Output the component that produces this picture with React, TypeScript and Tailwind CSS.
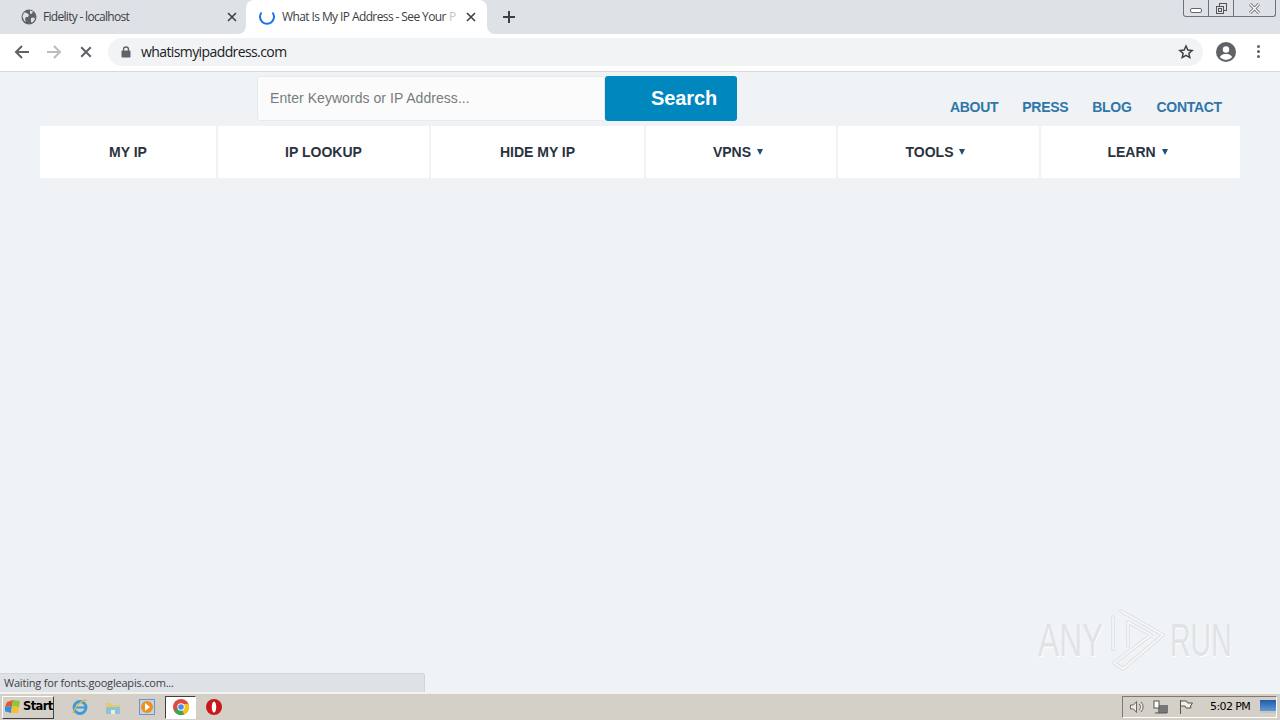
import React from "react";

const ui = { fontFamily: '"Open Sans","Noto Sans",sans-serif' };

function Globe() {
  return (
    <svg width="16" height="16" viewBox="0 0 16 16">
      <circle cx="8" cy="8" r="7.500" fill="#5f6368" />
      <path d="M3 3.500l3 .5 2 2-1 2-2 0-1 2 1 3-2-1.500-1.500-4zM9 1.500l3 1-1 2-2 .5zM10 9l3-.5 1 1.500-2 3-2 .5z" fill="#dee1e6" />
    </svg>
  );
}

function X({ size = 10, color = "#3c4043", w = 1.6 }: { size?: number; color?: string; w?: number }) {
  return (
    <svg width={size} height={size} viewBox="0 0 10 10">
      <path d="M1 1l8 8M9 1l-8 8" stroke={color} strokeWidth={w} fill="none" />
    </svg>
  );
}

function Tabs() {
  return (
    <div className="flex h-[34px] bg-[#dee1e6] relative shrink-0">
      <div className="w-[246px] flex items-center pl-[21px] pr-[9px]">
        <Globe />
        <span className="ml-[6px] text-[12px] leading-[16px] text-[#3c4043] flex-1 tracking-[-0.7px]" style={ui}>Fidelity - localhost</span>
        <X />
      </div>
      <div className="w-[241px] bg-white rounded-t-[8px] flex items-center pl-[13px] pr-[11px] relative">
        <svg className="absolute left-[-8px] bottom-0" width="8" height="8" viewBox="0 0 8 8">
          <path d="M8 0v8H0a8 8 0 0 0 8-8z" fill="#fff" />
        </svg>
        <svg className="absolute right-[-8px] bottom-0" width="8" height="8" viewBox="0 0 8 8">
          <path d="M0 0v8h8a8 8 0 0 1-8-8z" fill="#fff" />
        </svg>
        <svg width="16" height="16" viewBox="0 0 16 16" className="shrink-0">
          <path d="M2.500 3.500A7 7 0 1 0 13.500 3.500" stroke="#1a73e8" strokeWidth="2" fill="none" />
        </svg>
        <div className="ml-[7px] w-[175px] overflow-hidden whitespace-nowrap shrink-0 leading-[16px] flex">
          <span className="text-[12px] text-[#3c4043] tracking-[-0.6px]" style={ui}>What Is My IP Address - See Your</span>
          <span className="ml-[3px] text-[12px] text-[#c4c6c9] tracking-[-0.6px]" style={ui}>P</span>
        </div>
        <span className="ml-[9px]"><X /></span>
      </div>
      <div className="ml-[15px] pt-[10px]">
        <svg width="14" height="14" viewBox="0 0 14 14">
          <path d="M7 1v12M1 7h12" stroke="#3c4043" strokeWidth="2" />
        </svg>
      </div>
      <div className="absolute right-[4px] top-0 h-[17px] w-[93px] border border-t-0 border-[#6b7280] rounded-b-[3px] flex">
        <div className="w-[25px] border-r border-[#6b7280] flex items-center justify-center pt-[4px]">
          <div className="w-[12px] h-[5px] border border-[#666] rounded-[2px] bg-white" />
        </div>
        <div className="w-[25px] border-r border-[#6b7280] flex items-center justify-center">
          <svg width="13" height="13" viewBox="0 0 13 13" fill="none" stroke="#555">
            <rect x="4.500" y="1.500" width="7" height="7" />
            <rect x="1.500" y="4.500" width="7" height="7" fill="#dee1e6" />
            <rect x="3.500" y="6.500" width="3" height="3" />
          </svg>
        </div>
        <div className="flex-1 flex items-center justify-center">
          <svg width="13" height="11" viewBox="0 0 13 11">
            <path d="M2 1l9 9M11 1l-9 9" stroke="#666" strokeWidth="3" fill="none" />
            <path d="M2 1l9 9M11 1l-9 9" stroke="#fff" strokeWidth="1.400" fill="none" />
          </svg>
        </div>
      </div>
    </div>
  );
}

function Toolbar() {
  return (
    <div className="flex items-center h-[38px] bg-white border-b border-[#d8d8d8] shrink-0 pb-[2px]">
      <div className="w-[108px] flex items-center shrink-0">
        <svg className="ml-[14px]" width="16" height="16" viewBox="0 0 16 16" fill="none" stroke="#5f6368" strokeWidth="2">
          <path d="M15 8H2M8 2L2 8l6 6" />
        </svg>
        <svg className="ml-[16px]" width="16" height="16" viewBox="0 0 16 16" fill="none" stroke="#b9bcc0" strokeWidth="2">
          <path d="M1 8h13M8 2l6 6-6 6" />
        </svg>
        <span className="ml-[18px]"><X size={12} color="#5f6368" w={1.700} /></span>
      </div>
      <div className="w-[1095px] h-[28px] bg-[#f1f3f4] rounded-full flex items-center pl-[13px] shrink-0">
        <svg width="10" height="12" viewBox="0 0 10 12">
          <rect x="0.500" y="4.500" width="9" height="7" rx="1" fill="#5f6368" />
          <path d="M2.500 5V3.500a2.500 2.500 0 0 1 5 0V5" fill="none" stroke="#5f6368" strokeWidth="1.300" />
        </svg>
        <span className="ml-[10px] text-[14px] text-[#202124] tracking-[-0.6px]" style={ui}>whatismyipaddress.com</span>
        <svg className="ml-auto mr-[9px]" width="16" height="16" viewBox="0 0 24 24" fill="none" stroke="#3c4043" strokeWidth="2.200">
          <path d="M12 3l2.700 6 6.500.7-4.900 4.300 1.400 6.400L12 17l-5.700 3.400 1.400-6.400-4.900-4.300 6.500-.7z" />
        </svg>
      </div>
      <svg className="ml-[13px]" width="20" height="20" viewBox="0 0 20 20">
        <circle cx="10" cy="10" r="10" fill="#5f6368" />
        <circle cx="10" cy="7.500" r="3.200" fill="#fff" />
        <path d="M3.800 15c1.500-2.500 4-3 6.200-3s4.700.5 6.200 3a8 8 0 0 1-12.400 0z" fill="#fff" />
      </svg>
      <div className="ml-[21px] flex flex-col gap-[2px]">
        <div className="w-[3px] h-[3px] rounded-full bg-[#5f6368]" />
        <div className="w-[3px] h-[3px] rounded-full bg-[#5f6368]" />
        <div className="w-[3px] h-[3px] rounded-full bg-[#5f6368]" />
      </div>
    </div>
  );
}

const navFont = { fontFamily: '"Liberation Sans",Arial,sans-serif' };

function NavItem({ label, w, caret }: { label: string; w: string; caret?: boolean }) {
  return (
    <div className={`${w} h-[52px] bg-white flex items-center justify-center text-[14px] font-bold text-[#2a3240]`}>
      {label}
      {caret && <span className="ml-[6px] mr-[6px] w-0 h-0 border-x-[3.500px] border-x-transparent border-t-[6px] border-t-[#1f4f77] mb-[1px]" />}
    </div>
  );
}

function Page() {
  return (
    <div className="flex-1 bg-[#f0f3f6] relative overflow-hidden" style={navFont}>
      <div className="flex h-[54px]">
        <div className="ml-[257px] mt-[4px] h-[45px] w-[348px] bg-[#fbfbfb] border border-[#e8eaec] rounded-l-[3px] flex items-center pl-[12px] text-[14px] text-[#777b80] tracking-[0.05px]">
          Enter Keywords or IP Address...
        </div>
        <div className="mt-[4px] h-[45px] w-[132px] bg-[#0087be] rounded-[3px] text-white text-[20px] font-bold flex items-center pl-[46px] pb-[1px] tracking-[-0.1px]">
          Search
        </div>
        <div className="ml-[213px] mt-[27px] flex gap-[24px] text-[14px] font-bold text-[#2f76a8] leading-[16px] tracking-[-0.3px]">
          <span>ABOUT</span>
          <span>PRESS</span>
          <span>BLOG</span>
          <span className="ml-[1px]">CONTACT</span>
        </div>
      </div>
      <div className="ml-[40px] w-[1200px] flex gap-[2px]">
        <NavItem label="MY IP" w="w-[176px]" />
        <NavItem label="IP LOOKUP" w="w-[211px]" />
        <NavItem label="HIDE MY IP" w="w-[213px]" />
        <NavItem label="VPNS" w="w-[190px]" caret />
        <NavItem label="TOOLS" w="w-[201px]" caret />
        <NavItem label="LEARN" w="w-[199px]" caret />
      </div>

      <div className="absolute left-0 bottom-0 w-[425px] h-[19px] bg-[#dee1e6] rounded-tr-[3px] border-t border-r border-[#d2d5da] pl-[4px] text-[11px] text-[#3c4043] leading-[18px] tracking-[-0.2px]" style={ui}>
        Waiting for fonts.googleapis.com...
      </div>

      <div className="absolute left-[1038px] top-[536px] flex items-center text-[#e0e3e6]">
        <span className="text-[46px] font-normal leading-none scale-x-[0.69] origin-left w-[70px] [text-shadow:1px_1px_0_#fff]">ANY</span>
        <svg width="60" height="64" viewBox="0 0 60 64" fill="none" strokeLinejoin="round" strokeLinecap="round">
          <g stroke="#e2e5e8" strokeWidth="4">
            <path d="M5 9v32" />
            <path d="M13 3l42 24-40 34-9-6 37-28-23-13v24" />
          </g>
          <g stroke="#fbfcfd" strokeWidth="1.200">
            <path d="M5 9v32" />
            <path d="M13 3l42 24-40 34-9-6 37-28-23-13v24" />
          </g>
        </svg>
        <span className="ml-[2px] text-[46px] font-normal leading-none scale-x-[0.62] origin-left w-[70px] [text-shadow:1px_1px_0_#fff]">RUN</span>
      </div>
    </div>
  );
}

function Taskbar() {
  return (
    <div className="h-[28px] bg-[#d4d0c8] border-t-2 border-[#f4f2ec] flex items-center shrink-0 relative">
      <div className="ml-[2px] w-[52px] h-[23px] border border-t-white border-l-white border-r-[#404040] border-b-[#404040] bg-[#d4d0c8] flex items-center pl-[2px]">
        <svg width="17" height="16" viewBox="0 0 17 16">
          <path d="M2 3l6-2-1 6-7 1z" fill="#e8552a" />
          <path d="M8 1l7 1-1 6-7-1z" fill="#8cc63f" />
          <path d="M0 8l7-1-1 7-7-2z" fill="#2f8fe0" />
          <path d="M7 7l7 1-1 6-7 0z" fill="#f4c02c" />
        </svg>
        <span className="ml-[1px] text-[11.500px] font-bold text-black" style={{ fontFamily: '"DejaVu Sans",sans-serif', letterSpacing: "-0.6px" }}>Start</span>
      </div>
      <svg className="ml-[17px]" width="18" height="18" viewBox="0 0 18 18" fill="none">
        <circle cx="9" cy="9.500" r="6" stroke="#3b9ad9" strokeWidth="2.800" />
        <path d="M4 9.500h10" stroke="#3b9ad9" strokeWidth="2" />
        <path d="M2 15C4 8 11 2 16 2" stroke="#e0b93c" strokeWidth="1.300" />
      </svg>
      <svg className="ml-[16px]" width="16" height="16" viewBox="0 0 16 16">
        <path d="M1 4h5l1 2h8v9H1z" fill="#e8c963" />
        <rect x="1" y="8" width="14" height="7" fill="#8fc1d8" />
        <rect x="6" y="11" width="4" height="4" fill="#e8f0d8" />
      </svg>
      <div className="ml-[18px] w-[16px] h-[16px] border border-[#6f93c5] bg-[#c3d4ea] flex items-center justify-center">
        <div className="w-[12px] h-[12px] rounded-full bg-[#ee8f1e] flex items-center justify-center">
          <div className="w-0 h-0 border-y-[4px] border-y-transparent border-l-[5px] border-l-white ml-[1px]" />
        </div>
      </div>
      <div className="ml-[10px] w-[31px] h-[23px] bg-white border border-t-[#404040] border-l-[#404040] border-r-white border-b-white flex items-center justify-center">
        <svg width="16" height="16" viewBox="0 0 16 16">
          <circle cx="8" cy="8" r="8" fill="#dd4b3e" />
          <path d="M8 8L1.100 12A8 8 0 0 0 11 15.400z" fill="#3aa757" />
          <path d="M8 8l3 7.400A8 8 0 0 0 15.500 5H8z" fill="#f6c31c" />
          <circle cx="8" cy="8" r="3.700" fill="#fff" />
          <circle cx="8" cy="8" r="2.800" fill="#4a8af0" />
        </svg>
      </div>
      <svg className="ml-[10px]" width="16" height="16" viewBox="0 0 16 16">
        <circle cx="8" cy="8" r="8" fill="#c9161d" />
        <ellipse cx="8" cy="8" rx="2.200" ry="5.500" fill="#fff" />
      </svg>
      <div className="ml-auto mr-[3px] w-[155px] h-[22px] border border-t-[#7d7a74] border-l-[#7d7a74] border-r-white border-b-white flex items-center pl-[6px] relative">
        <svg width="16" height="16" viewBox="0 0 16 16" fill="none" stroke="#666">
          <path d="M1.500 6h3l3-3.500v11l-3-3.500h-3zM10 5a4 4 0 0 1 0 6M12 3a7 7 0 0 1 0 10" fill="#efece4" />
        </svg>
        <svg className="ml-[8px]" width="16" height="16" viewBox="0 0 16 16">
          <rect x="5" y="6" width="10" height="8" fill="#777" />
          <rect x="1" y="2" width="5" height="7" fill="#fff" stroke="#555" />
          <path d="M2 14h12" stroke="#555" />
        </svg>
        <svg className="ml-[9px]" width="16" height="16" viewBox="0 0 16 16" fill="none" stroke="#555">
          <path d="M2.500 1v14M2.500 2h6l1 2h5l-2 3 .5 2h-5l-1-2h-4.500" fill="#f1efe8" />
        </svg>
        <span className="ml-[16px] text-[11px] text-black" style={{ fontFamily: '"DejaVu Sans",sans-serif', letterSpacing: "-0.6px" }}>5:02 PM</span>
        <div className="absolute right-[0px] top-[3px] w-[16px] h-[13px] bg-gradient-to-b from-[#1f5ba8] to-[#5f9ad8] border-b-2 border-[#c8c4b8]" />
      </div>
    </div>
  );
}

export default function App() {
  return (
    <div className="w-[1280px] h-[720px] flex flex-col overflow-hidden">
      <Tabs />
      <Toolbar />
      <Page />
      <Taskbar />
    </div>
  );
}
